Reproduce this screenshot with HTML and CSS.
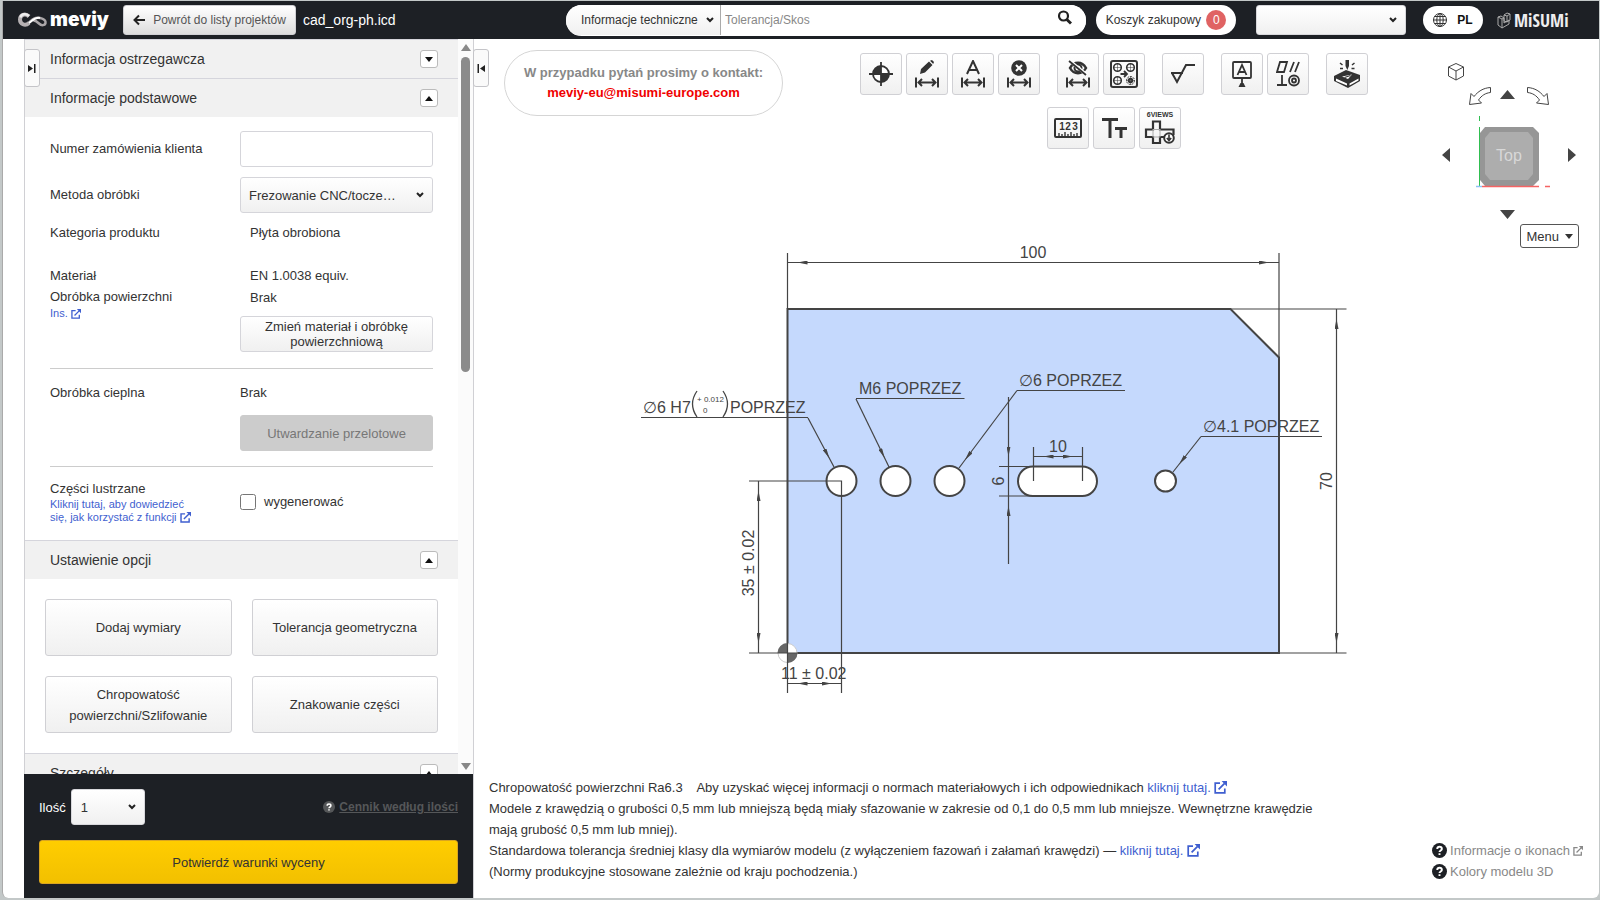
FILE: index.html
```
<!DOCTYPE html>
<html lang="pl">
<head>
    <meta charset="utf-8">
    <title>meviy - cad_org-ph.icd</title>
    <link rel="stylesheet" href="styles.css">
</head>
<body>
    <!-- shared icons -->
    <svg class="sprite" aria-hidden="true">
        <symbol id="external" viewBox="0 0 13 13">
            <path d="M6 2.2H1.2v9.6h9.6V7.5M4.6 8.4l6-6" fill="none" stroke="currentColor" stroke-width="1.7"/>
            <path d="M7.6 0H13v5.4z" fill="currentColor"/>
        </symbol>
        <symbol id="question" viewBox="0 0 14 14">
            <circle cx="7" cy="7" r="7" fill="currentColor"/>
            <path class="question-mark" d="M4.9 5.5c0-2.600 4.300-2.600 4.300 0 0 1.500-2.200 1.500-2.200 3M7 9.600v1.500" fill="none" stroke-width="1.800"/>
        </symbol>
        <symbol id="span" viewBox="0 0 24 10">
            <path d="M1 0v10M23 0v10M3 5h18M7 1.500L3.500 5 7 8.500M17 1.500L20.500 5 17 8.500" fill="none" stroke="currentColor" stroke-width="2"/>
        </symbol>
        <symbol id="up" viewBox="0 0 8 5"><path d="M0 5l4-5 4 5z" fill="currentColor"/></symbol>
        <symbol id="down" viewBox="0 0 8 5"><path d="M0 0h8L4 5z" fill="currentColor"/></symbol>
    </svg>

    <div class="window">
        <header class="topbar">
            <a class="logo" href="#">
                <svg width="30" height="16" viewBox="0 0 30 16">
                    <path d="M11 4.500C7 .5 2 3 2 7.500s5 7 9 3.500" fill="none" stroke="#b5b0b2" stroke-width="4"/>
                    <path d="M11 4C7.500 1 3.500 2 2.500 5.500" fill="none" stroke="#eee" stroke-width="2.500"/>
                    <path d="M10 11.500c4-3.500 6-6.500 12-5.500 4 .8 6 2.500 5.500 5s-4 3-6.500.5-4-3.500-6-3" fill="none" stroke="#aaa6a8" stroke-width="2.500"/>
                    <path d="M11 11c4-3 6-6 11-5" fill="none" stroke="#fff" stroke-width="2"/>
                </svg>
                <span>meviy</span>
            </a>
            <button class="back" type="button">
                <svg width="12" height="12" viewBox="0 0 12 12"><path d="M12 6H2M6 1.500L1.500 6 6 10.500" fill="none" stroke="#222" stroke-width="2"/></svg>
                Powrót do listy projektów
            </button>
            <span class="filename">cad_org-ph.icd</span>

            <form class="search">
                <select aria-label="Kategoria wyszukiwania"><option>Informacje techniczne</option></select>
                <input type="text" aria-label="Szukaj" placeholder="Tolerancja/Skos">
                <button type="button" aria-label="Szukaj">
                    <svg width="16" height="16" viewBox="0 0 16 16"><circle cx="6.500" cy="6" r="4.500" fill="none" stroke="#222" stroke-width="2.200"/><path d="M9.800 9.500L14 13.500" stroke="#222" stroke-width="3"/></svg>
                </button>
            </form>
            <button class="cart" type="button">Koszyk zakupowy <span class="badge">0</span></button>
            <select class="account" aria-label="Konto"><option></option></select>
            <button class="language" type="button">
                <svg width="14" height="14" viewBox="0 0 14 14" fill="none" stroke="#333">
                    <circle cx="7" cy="7" r="6.500"/><ellipse cx="7" cy="7" rx="3.200" ry="6.500"/><path d="M7 0v14M0 7h14M1.500 3.500h11M1.500 10.500h11"/>
                </svg>
                PL
            </button>
            <a class="misumi" href="#">
                <svg width="14" height="17" viewBox="0 0 14 17" fill="none" stroke="#aaa">
                    <path d="M1 5l4 2v9l-4-3zM5 7l2-1v5l5-3v4l-7 4M7 3l3-2 3 1v6l-3 2-3-1zM7 3l3 1 3-2M10 4v6M1 5l3-1 3 2"/>
                </svg>
                <span>MiSUMi</span>
            </a>
        </header>

        <div class="workspace">
            <aside class="sidebar">
                <button class="tab tab-left" type="button" aria-label="Rozwiń panel">
                    <svg width="8" height="9" viewBox="0 0 8 9"><path d="M0 1l5 3.500L0 8zM6 0h1.500v9H6z" fill="#222"/></svg>
                </button>
                <div class="scroll-area">
                    <div class="panel">
                        <div class="section-head">
                            <h2>Informacja ostrzegawcza</h2>
                            <button type="button" aria-label="Rozwiń"><svg width="8" height="5"><use href="#down"/></svg></button>
                        </div>
                        <div class="section-head">
                            <h2>Informacje podstawowe</h2>
                            <button type="button" aria-label="Zwiń"><svg width="8" height="5"><use href="#up"/></svg></button>
                        </div>
                        <div class="basics">
                            <div class="row">
                                <label for="orderNumber">Numer zamówienia klienta</label>
                                <input id="orderNumber" class="control" type="text">
                            </div>
                            <div class="row">
                                <label for="method">Metoda obróbki</label>
                                <select id="method" class="control"><option>Frezowanie CNC/tocze…</option></select>
                            </div>
                            <div class="row">
                                <span>Kategoria produktu</span>
                                <span class="value">Płyta obrobiona</span>
                            </div>
                            <div class="row material">
                                <div class="names">
                                    <div>Materiał</div>
                                    <div>Obróbka powierzchni</div>
                                    <a class="hint" href="#">Ins. <svg width="10" height="10"><use href="#external"/></svg></a>
                                </div>
                                <div class="values">
                                    <div class="value">EN 1.0038 equiv.</div>
                                    <div class="value">Brak</div>
                                    <button class="control" type="button">Zmień materiał i obróbkę powierzchniową</button>
                                </div>
                            </div>
                            <div class="row heat">
                                <div class="names">Obróbka cieplna</div>
                                <div class="values">
                                    <div>Brak</div>
                                    <button class="control" type="button" disabled>Utwardzanie przelotowe</button>
                                </div>
                            </div>
                            <div class="row mirror">
                                <div>
                                    <div>Części lustrzane</div>
                                    <a class="hint" href="#">Kliknij tutaj, aby dowiedzieć<br>się, jak korzystać z funkcji <svg width="11" height="11"><use href="#external"/></svg></a>
                                </div>
                                <label class="check"><input type="checkbox">wygenerować</label>
                            </div>
                        </div>
                        <div class="section-head">
                            <h2>Ustawienie opcji</h2>
                            <button type="button" aria-label="Zwiń"><svg width="8" height="5"><use href="#up"/></svg></button>
                        </div>
                        <div class="options">
                            <button type="button">Dodaj wymiary</button>
                            <button type="button">Tolerancja geometryczna</button>
                            <button type="button">Chropowatość powierzchni/Szlifowanie</button>
                            <button type="button">Znakowanie części</button>
                        </div>
                        <div class="section-head">
                            <h2>Szczegóły</h2>
                            <button type="button" aria-label="Zwiń"><svg width="8" height="5"><use href="#up"/></svg></button>
                        </div>
                    </div>
                    <div class="scrollbar">
                        <svg width="10" height="7" viewBox="0 0 8 5" preserveAspectRatio="none"><use href="#up"/></svg>
                        <div class="track"><div class="thumb"></div></div>
                        <svg width="10" height="7" viewBox="0 0 8 5" preserveAspectRatio="none"><use href="#down"/></svg>
                    </div>
                </div>
                <div class="order">
                    <div class="order-line">
                        <label for="quantity">Ilość</label>
                        <select id="quantity"><option>1</option></select>
                        <a href="#"><svg width="12" height="12"><use href="#question"/></svg><span>Cennik według ilości</span></a>
                    </div>
                    <button class="confirm" type="button">Potwierdź warunki wyceny</button>
                </div>
            </aside>

            <main class="viewer">
                <button class="tab tab-right" type="button" aria-label="Zwiń panel">
                    <svg width="8" height="9" viewBox="0 0 8 9"><path d="M8 1L3 4.500 8 8zM.5 0H2v9H.5z" fill="#222"/></svg>
                </button>
                <div class="tools">
                    <div class="contact">
                        <div>W przypadku pytań prosimy o kontakt:</div>
                        <a href="mailto:meviy-eu@misumi-europe.com">meviy-eu@misumi-europe.com</a>
                    </div>
                    <div class="toolbar">
                        <div class="tool-row">
                            <div class="group">
                                <button type="button" aria-label="Punkt zerowy">
                                    <svg width="24" height="24" viewBox="0 0 24 24"><circle cx="12" cy="12" r="8" fill="#fff" stroke="#333" stroke-width="1.800"/><path d="M12 12V4a8 8 0 0 0-8 8zM12 12v8a8 8 0 0 0 8-8z" fill="#333"/><path d="M12 0v24M0 12h24" stroke="#333" stroke-width="1.800"/></svg>
                                </button>
                                <button type="button" aria-label="Edytuj wymiar">
                                    <svg width="24" height="28" viewBox="0 0 24 28"><path d="M5 14l1-5L14 1.500l3.500 3.500L10 12.500zM15 .8L17 0l2 2-.8 2z" fill="#333"/><use href="#span" y="17" width="24" height="11"/></svg>
                                </button>
                                <button type="button" aria-label="Wymiar automatyczny">
                                    <svg width="24" height="28" viewBox="0 0 24 28"><path d="M6 14L12 1l6 13M8 10h8" fill="none" stroke="#333" stroke-width="2"/><use href="#span" y="17" width="24" height="11"/></svg>
                                </button>
                                <button type="button" aria-label="Usuń wymiar">
                                    <svg width="24" height="28" viewBox="0 0 24 28"><circle cx="12" cy="8" r="7.800" fill="#333"/><path d="M9 5l6 6M15 5l-6 6" stroke="#fff" stroke-width="2"/><use href="#span" y="17" width="24" height="11"/></svg>
                                </button>
                            </div>
                            <div class="group">
                                <button type="button" aria-label="Ukryj wymiary">
                                    <svg width="24" height="28" viewBox="0 0 24 28"><path d="M4 8c4-7 12-7 16 0-4 7-12 7-16 0z" fill="none" stroke="#333" stroke-width="2.500"/><circle cx="12" cy="8" r="3.500" fill="none" stroke="#333" stroke-width="2"/><path d="M4 1l17 14" stroke="#fff" stroke-width="3"/><path d="M3 1l17 14" stroke="#333" stroke-width="1.800"/><use href="#span" y="17" width="24" height="11"/></svg>
                                </button>
                                <button type="button" aria-label="Grupa otworów">
                                    <svg width="28" height="28" viewBox="0 0 28 28" fill="none" stroke="#333"><rect x="1" y="1" width="26" height="26" rx="2" stroke-width="2"/><g stroke-width="1.600"><circle cx="7.500" cy="7.500" r="3.800"/><circle cx="20.500" cy="7.500" r="3.800"/><circle cx="7.500" cy="20.500" r="3.800"/></g><circle cx="20.500" cy="20.500" r="4" stroke-dasharray="2 1"/><circle cx="20.500" cy="20.500" r="1.800" stroke-width="2"/><path d="M7.500 3v9M3 7.500h9M20.500 3v9M16 7.500h9M7.500 16v9M3 20.500h9M20.500 16v9M16 20.500h9" stroke-width=".5"/><path d="M10.500 14h6M14 11l3 3-3 3" stroke-width="1.800"/></svg>
                                </button>
                            </div>
                            <div class="group">
                                <button type="button" aria-label="Chropowatość">
                                    <svg width="26" height="22" viewBox="0 0 26 22"><path d="M1 10h12M2 10l5 9 9-17h9" fill="none" stroke="#333" stroke-width="2"/></svg>
                                </button>
                            </div>
                            <div class="group">
                                <button type="button" aria-label="Baza">
                                    <svg width="22" height="28" viewBox="0 0 22 28"><rect x="2" y="2" width="18" height="16" rx="1" fill="none" stroke="#333" stroke-width="1.800"/><path d="M6.500 15L11 5l4.500 10M8 12h6M11 18v5" fill="none" stroke="#333" stroke-width="1.800"/><path d="M7.500 27l2-4h3l2 4z" fill="#333"/></svg>
                                </button>
                                <button type="button" aria-label="Tolerancja geometryczna">
                                    <svg width="24" height="26" viewBox="0 0 24 26" fill="none" stroke="#333" stroke-width="1.800"><path d="M1 11L4 1h7l-3 10zM14 11l4-10M19 11l4-10M6 14v10M1 24h10"/><circle cx="18" cy="19.500" r="5"/><circle cx="18" cy="19.500" r="2"/></svg>
                                </button>
                            </div>
                            <div class="group">
                                <button type="button" aria-label="Grawerowanie">
                                    <svg width="28" height="28" viewBox="0 0 28 28"><path d="M1 16l12-6 14 5v6l-12 7L1 21z" fill="#333"/><path d="M9 16.500l10-2-4 4.500zM3 18.500l11 5v2l-11-4.500zM16.500 23.500l9-5v2l-9 5z" fill="#fff"/><path d="M11.500 17.500l6-2" stroke="#333" stroke-width="1.200"/><path d="M12.500 0h3.500v6l-1.700 4-1.800-4z" fill="#333"/><path d="M7 3l2.500 2M21.500 3L19 5M7 8.500h3M18.500 8.500h3" stroke="#333" stroke-width="1.500"/></svg>
                                </button>
                            </div>
                        </div>
                        <div class="tool-row">
                            <div class="group">
                                <button type="button" aria-label="Pomiar">
                                    <svg width="28" height="20" viewBox="0 0 28 20"><rect x="1" y="1" width="26" height="18" rx="1" fill="none" stroke="#333" stroke-width="2"/><path d="M5 19v-4M8 19v-3M11 19v-5M14 19v-3M17 19v-5M20 19v-3M23 19v-4" stroke="#333" stroke-width="1.400"/><g font-size="10" text-anchor="middle" class="icon-text"><text x="8" y="12">1</text><text x="14" y="12">2</text><text x="21" y="12">3</text></g></svg>
                                </button>
                                <button type="button" aria-label="Rozmiar tekstu">
                                    <svg width="26" height="22" viewBox="0 0 26 22"><path d="M1 2.500h16M9 2.500V21M14 11.500h12M20 11.500V21" fill="none" stroke="#333" stroke-width="3"/></svg>
                                </button>
                                <button type="button" aria-label="Widoki">
                                    <svg width="32" height="34" viewBox="0 0 32 34"><text x="16" y="6" font-size="7" text-anchor="middle" class="icon-text">6VIEWS</text><path d="M21 26h-5v6H9v-6H2v-7.500h7v-8h7v8h13.500V24" fill="none" stroke="#333" stroke-width="2.200"/><path d="M9 18.500h7M9 26h7M9 18v8M16 18v8" stroke="#aaa"/><circle cx="25" cy="27" r="4.800" fill="#fff" stroke="#333" stroke-width="2"/><path d="M25 23.500v5M22.800 27l2.200 2.500 2.200-2.500" fill="none" stroke="#333" stroke-width="1.600"/></svg>
                                </button>
                            </div>
                        </div>
                    </div>
                    <div class="navigator">
                        <svg width="140" height="160" viewBox="1439 60 140 160">
                            <g fill="#fff" stroke="#444" stroke-linejoin="round">
                                <path d="M1456 63.500l7.500 3.500v9l-7.500 4-7.500-4v-9zM1448.500 67l7.500 4 7.500-4M1456 71v9"/>
                                <path d="M1469.500 104.500l1.500-11 3 3c4-5 9-8.500 16.500-9v5c-5 .5-9 3-12 7.500l3 3z"/>
                                <path d="M1548.500 104.500l-1.500-11-3 3c-4-5-9-8.500-16.500-9v5c5 .5 9 3 12 7.500l-3 3z"/>
                            </g>
                            <path d="M1500 99l7.500-9 7.500 9zM1500 210h15l-7.500 9zM1450 148v14l-8-7zM1568 148v14l8-7z" fill="#444"/>
                            <path d="M1485 127h48l6 6v47l-6 6h-48l-5-6v-47z" fill="#969696"/>
                            <path d="M1490 132h38l5 6v36l-5 6h-38l-5-6v-36z" fill="#adadad"/>
                            <text x="1509" y="161" text-anchor="middle" class="cube-text">Top</text>
                            <path d="M1479.500 116v5M1479.500 127v59" stroke="#2fbf50"/>
                            <path d="M1482 186.500h57M1545 186.500h5" stroke="#f56464" stroke-width="1.500"/>
                            <path d="M1476 186.500h6" stroke="#8fc3f5" stroke-width="1.500"/>
                        </svg>
                        <button class="menu" type="button">Menu <svg width="8" height="5"><use href="#down"/></svg></button>
                    </div>
                </div>

                <svg class="drawing" viewBox="474 250 1125 450">
                    <defs>
                        <marker id="head" viewBox="0 0 20 4" refX="20" refY="2" markerWidth="20" markerHeight="4" markerUnits="userSpaceOnUse" orient="auto-start-reverse">
                            <path d="M0 0l10 2L0 4z" fill="#444"/>
                        </marker>
                    </defs>
                    <path class="plate" d="M787.500 309H1230.500L1279 357.500V653H787.500z"/>
                    <g class="hole">
                        <circle cx="841.500" cy="481" r="15"/>
                        <circle cx="895.500" cy="481" r="15"/>
                        <circle cx="949.500" cy="481" r="15"/>
                        <circle cx="1165.500" cy="481" r="10.500"/>
                        <rect x="1018" y="466.500" width="79" height="29.500" rx="14.750"/>
                    </g>
                    <!-- extension lines -->
                    <path class="thin" d="M787.500 253v56M1279 253v105M1279 309h67.500M1231 309h48M1279 653h67.500M749 481h92.500v212M749 653h38.500v40M999 466.500h34M999 496h34M1033.500 447v34M1082.500 447v34"/>
                    <!-- dimension lines -->
                    <g class="thin heads">
                        <path d="M787.500 262.500H1279"/>
                        <path d="M1336.500 309v344"/>
                        <path d="M758.500 481v172"/>
                        <path d="M787.500 683.500h54"/>
                        <path d="M1033.500 456.500h49"/>
                    </g>
                    <g class="thin head-end">
                        <path d="M1008.500 397v69.500"/>
                        <path d="M1008.500 564v-68"/>
                    </g>
                    <!-- hole leaders -->
                    <g class="thin head-end">
                        <path d="M808 418l26 49"/>
                        <path d="M856 399l33 68"/>
                        <path d="M1017 390.500l-58 77.500"/>
                        <path d="M1201 436.500l-28 35.500"/>
                    </g>
                    <path class="thin" d="M1008.500 466v30M641 417.500h167M856 398.500h108.500M1017 390.500h108M1201 436.500h121"/>
                    <g class="label">
                        <text x="1033" y="258" text-anchor="middle">100</text>
                        <text x="643" y="413">∅6 H7</text>
                        <text x="730" y="413">POPRZEZ</text>
                        <text x="859" y="394">M6 POPRZEZ</text>
                        <text x="1019" y="386">∅6 POPRZEZ</text>
                        <text x="1203" y="432">∅4.1 POPRZEZ</text>
                        <text x="1058" y="452" text-anchor="middle">10</text>
                        <text x="781" y="679">11 ± 0.02</text>
                        <text transform="translate(1332 481) rotate(-90)" text-anchor="middle">70</text>
                        <text transform="translate(1004 481) rotate(-90)" text-anchor="middle">6</text>
                        <text transform="translate(754 563) rotate(-90)" text-anchor="middle">35 ± 0.02</text>
                    </g>
                    <g class="label small">
                        <text x="697" y="402">+ 0.012</text>
                        <text x="703" y="413">0</text>
                    </g>
                    <path d="M697 391q-9 13 0 26M723 391q9 13 0 26" fill="none" stroke="#444" stroke-width="1.300"/>
                    <!-- origin -->
                    <circle cx="787.500" cy="653" r="9.500" fill="#fff" stroke="#ccc"/>
                    <path d="M787.500 653v-10a10 10 0 0 0-10 10zM787.500 653v10a10 10 0 0 0 10-10z" fill="#666"/>
                    <path class="thin" d="M777.500 653h20M787.500 643v20"/>
                </svg>

                <footer class="notes">
                    <div class="note-text">
                        <p>Chropowatość powierzchni Ra6.3 &nbsp;&nbsp; Aby uzyskać więcej informacji o normach materiałowych i ich odpowiednikach <a href="#">kliknij tutaj. <svg width="13" height="13"><use href="#external"/></svg></a></p>
                        <p>Modele z krawędzią o grubości 0,5 mm lub mniejszą będą miały sfazowanie w zakresie od 0,1 do 0,5 mm lub mniejsze. Wewnętrzne krawędzie mają grubość 0,5 mm lub mniej).</p>
                        <p>Standardowa tolerancja średniej klasy dla wymiarów modelu (z wyłączeniem fazowań i załamań krawędzi) — <a href="#">kliknij tutaj. <svg width="13" height="13"><use href="#external"/></svg></a></p>
                        <p>(Normy produkcyjne stosowane zależnie od kraju pochodzenia.)</p>
                    </div>
                    <nav class="help">
                        <a href="#"><svg class="dark" width="15" height="15"><use href="#question"/></svg>Informacje o ikonach <svg width="10" height="10"><use href="#external"/></svg></a>
                        <a href="#"><svg class="dark" width="15" height="15"><use href="#question"/></svg>Kolory modelu 3D</a>
                    </nav>
                </footer>
            </main>
        </div>
    </div>
</body>
</html>
```
FILE: styles.css
```
* {
    box-sizing: border-box;
}

body {
    margin: 0;
    height: 100vh;
    padding: 1px 1px 2px 2px;
    background: #c3c8c8;
    color: #333;
    font-family: "Liberation Sans", Arial, sans-serif;
    font-size: 13px;
}

button, input, select {
    font: inherit;
    color: inherit;
    margin: 0;
}

button {
    padding: 0;
    border: 1px solid #d0d0d4;
    border-radius: 3px;
    background: linear-gradient(#fff, #f0f0f0);
}

a {
    color: #3f5fd0;
    text-decoration: none;
}

select {
    appearance: none;
    border: 1px solid #d8d8dc;
    border-radius: 3px;
    background: url("data:image/svg+xml,%3Csvg xmlns='http://www.w3.org/2000/svg' width='8' height='6'%3E%3Cpath d='M1 1l3 3 3-3' fill='none' stroke='%23222' stroke-width='2'/%3E%3C/svg%3E") no-repeat right 8px center, linear-gradient(#fff, #f0f0f0);
}

.sprite {
    position: absolute;
    width: 0;
    height: 0;
}

.window {
    height: 100%;
    display: flex;
    flex-direction: column;
    overflow: hidden;
    background: #fff;
    border-left: 1px solid #aaa;
    border-radius: 0 0 6px 6px;
}

/* top bar */
.topbar {
    flex: none;
    display: flex;
    align-items: center;
    height: 38px;
    padding: 0 28px 0 15px;
    background: #1d2025;
    color: #fff;
    font-size: 12px;
    white-space: nowrap;
}

.topbar button, .topbar select {
    height: 30px;
    color: #333;
}

.topbar svg {
    flex: none;
}

.logo {
    display: flex;
    align-items: center;
    gap: 2px;
    width: 105px;
    color: #fff;
}

.logo span {
    font: 900 19px/30px Inter, sans-serif;
}

.topbar .back {
    display: flex;
    align-items: center;
    justify-content: center;
    gap: 8px;
    width: 173px;
    background: linear-gradient(#fff, #ddd);
    color: #555;
}

.filename {
    margin-left: 7px;
    font-size: 14px;
}

.search {
    flex: 0 1 520px;
    display: flex;
    height: 31px;
    margin: 0 10px 0 auto;
    border-radius: 16px;
    background: #fff;
    overflow: hidden;
}

.search select {
    width: 155px;
    padding: 0 0 0 15px;
    border: 0;
    border-right: 1px solid #aaa;
    border-radius: 0;
    background-position: right 6px center, 0 0;
}

.search input {
    flex: 1;
    min-width: 0;
    padding: 0 4px;
    border: 0;
    color: #333;
}

.search input::placeholder {
    color: #888;
}

.search button {
    width: 42px;
    border: 0;
    background: #fff;
}

.topbar .cart {
    width: 140px;
    margin-right: 20px;
    border: 0;
    border-radius: 16px;
    background: #fff;
}

.badge {
    display: inline-block;
    width: 20px;
    margin-left: 2px;
    border-radius: 10px;
    background: #e06363;
    color: #fff;
    line-height: 20px;
}

.account {
    width: 150px;
    margin-right: 17px;
}

.topbar .language {
    display: flex;
    align-items: center;
    justify-content: center;
    gap: 10px;
    width: 60px;
    height: 28px;
    margin-right: 14px;
    border: 0;
    border-radius: 14px;
    background: #fff;
    color: #111;
    font-weight: bold;
}

.misumi {
    display: flex;
    align-items: center;
    gap: 3px;
    width: 74px;
    color: #eee;
}

.misumi span {
    font: bold 18px/20px "Open Sans Condensed", "Liberation Sans Narrow", sans-serif;
}

/* left side */
.workspace {
    flex: 1;
    min-height: 0;
    display: flex;
}

.sidebar {
    position: relative;
    flex: 0 0 450px;
    display: flex;
    flex-direction: column;
    margin-left: 21px;
    border-left: 1px solid #d0d0d4;
    border-right: 1px solid #d0d0d4;
}

.tab {
    position: absolute;
    z-index: 1;
    top: 10px;
    left: -1px;
    width: 16px;
    height: 38px;
    background: #fafafa;
    border-color: #c4c4c8;
}

.scroll-area {
    flex: 1;
    min-height: 0;
    display: flex;
}

.panel {
    flex: 1;
    overflow: hidden;
}

.section-head {
    display: flex;
    align-items: center;
    justify-content: space-between;
    height: 39px;
    padding: 0 20px 0 25px;
    border-top: 1px solid #d5d5dc;
    background: #f1f1f1;
}

.section-head h2 {
    margin: 0;
    font-size: 14px;
    font-weight: normal;
}

.section-head button {
    display: grid;
    place-items: center;
    width: 18px;
    height: 18px;
    border-color: #bbb;
    color: #111;
    background: #fff;
}

.basics {
    padding: 14px 25px 16px;
}

.row {
    display: grid;
    grid-template-columns: 190px 1fr;
    align-items: center;
    margin-bottom: 10px;
    line-height: 20px;
}

.control {
    width: 100%;
    height: 36px;
    padding: 0 8px;
    border: 1px solid #d5d5da;
    border-radius: 3px;
    line-height: 15px;
}

.control:disabled {
    border-color: #ccc;
    background: #ccc;
    color: #777;
}

.value {
    padding-left: 10px;
}

.material, .heat, .mirror {
    align-items: start;
    margin-bottom: 0;
}

.material {
    padding: 12px 0 15px;
    border-bottom: 1px solid #ccc;
}

.names {
    line-height: 21px;
}

.values {
    line-height: 22px;
}

.material .control {
    margin-top: 7px;
}

.heat {
    padding: 13px 0 15px;
    border-bottom: 1px solid #ccc;
}

.heat .control {
    margin-top: 11px;
}

.mirror {
    padding-top: 13px;
    line-height: 18px;
}

.hint {
    display: block;
    font-size: 11px;
    line-height: 13px;
}

.hint svg, .notes p svg {
    vertical-align: -2px;
}

.check {
    display: flex;
    align-items: center;
    gap: 8px;
    margin-top: 13px;
}

.check input {
    width: 16px;
    height: 16px;
}

.options {
    display: grid;
    grid-template-columns: 1fr 1fr;
    gap: 20px;
    padding: 20px;
}

.options button {
    height: 57px;
    padding: 0 10px;
    line-height: 21px;
}

.scrollbar {
    flex: 0 0 15px;
    display: flex;
    flex-direction: column;
    align-items: center;
    gap: 6px;
    padding: 5px 0 4px;
    background: #fbfbfb;
    color: #888;
}

.track {
    flex: 1;
}

.thumb {
    width: 9px;
    height: 45%;
    border-radius: 5px;
    background: #8b8b8b;
}

.order {
    flex: none;
    padding: 15px 15px 14px;
    margin-left: -1px;
    background: #1d2025;
    color: #fff;
}

.order-line {
    display: flex;
    align-items: center;
    gap: 5px;
    margin-bottom: 15px;
}

.order-line select {
    width: 74px;
    height: 36px;
    padding-left: 9px;
    color: #333;
}

.order-line a {
    display: flex;
    align-items: center;
    gap: 4px;
    margin-left: auto;
    color: #555759;
    font-size: 12px;
    font-weight: bold;
}

.order-line a span {
    text-decoration: underline;
}

.question-mark {
    stroke: #fff;
}

.order-line .question-mark {
    stroke: #1d2025;
}

.confirm {
    width: 100%;
    height: 44px;
    border-color: #d9a520;
    background: linear-gradient(#ffcd00, #f2c000);
    color: #333;
}

/* drawing side */
.viewer {
    position: relative;
    flex: 1;
    min-width: 0;
    display: flex;
    flex-direction: column;
}

.tools {
    display: flex;
    align-items: flex-start;
    height: 211px;
    padding: 11px 20px 0 30px;
}

.contact {
    width: 279px;
    padding: 12px 0;
    border: 1px solid #d5d5d5;
    border-radius: 33px;
    color: #888;
    font-weight: bold;
    line-height: 20px;
    text-align: center;
}

.contact a {
    color: #f00000;
}

.toolbar {
    flex: 1;
    display: grid;
    gap: 12px;
    padding: 3px 0 0 5px;
}

.tool-row, .group {
    display: flex;
    justify-content: center;
    gap: 4px;
}

.tool-row {
    gap: 17px;
}

.group button {
    display: grid;
    place-items: center;
    width: 42px;
    height: 42px;
    color: #333;
}

.icon-text {
    font-family: "Liberation Sans", sans-serif;
    font-weight: bold;
    fill: #333;
}

.navigator {
    display: flex;
    flex-direction: column;
    align-items: flex-end;
    gap: 4px;
    padding-top: 10px;
}

.navigator > svg {
    display: block;
}

.cube-text {
    font-size: 16px;
    fill: #d8d8d8;
}

.menu {
    width: 59px;
    height: 24px;
    border-color: #555;
    background: #fff;
}

.menu svg {
    margin-left: 2px;
    vertical-align: 2px;
}

.drawing {
    width: 100%;
    min-height: 0;
    overflow: visible;
}

.plate {
    fill: #c5d9fd;
    stroke: #444;
    stroke-width: 2px;
}

.hole {
    fill: #fff;
    stroke: #444;
    stroke-width: 2px;
}

.thin {
    fill: none;
    stroke: #444;
    stroke-width: 1.2px;
}

.heads path {
    marker-start: url(#head);
    marker-end: url(#head);
}

.head-end path {
    marker-end: url(#head);
}

.label {
    font-size: 16px;
    fill: #444;
}

.small {
    font-size: 8px;
}

.notes {
    display: flex;
    align-items: flex-end;
    justify-content: space-between;
    margin-top: auto;
    padding: 0 16px 16px 15px;
    line-height: 21px;
}

.note-text {
    width: 830px;
}

.notes p {
    margin: 0;
}

.help a {
    display: flex;
    align-items: center;
    gap: 3px;
    color: #888;
}

.help .dark {
    color: #1d2025;
}
```
